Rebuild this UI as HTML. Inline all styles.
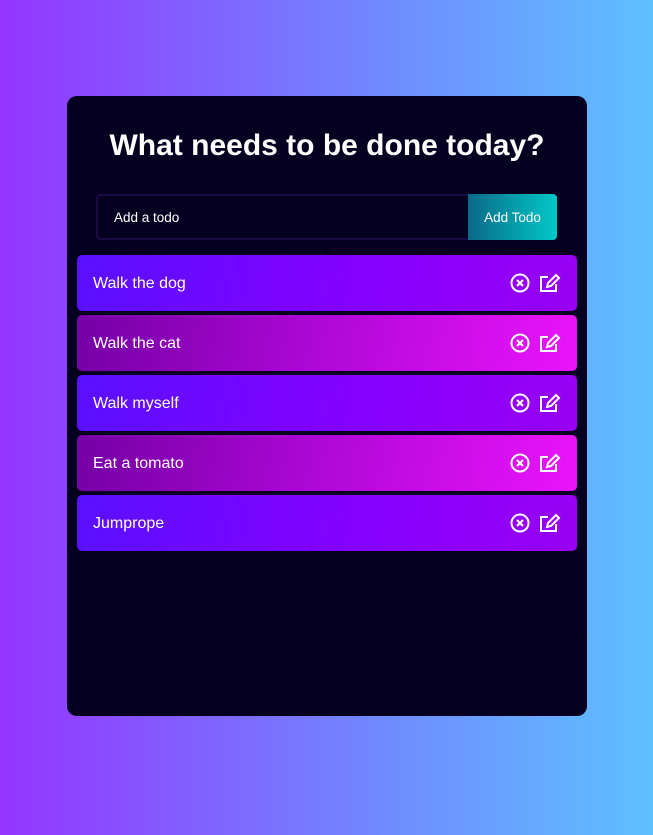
<!DOCTYPE html>
<html><head><style>
*{margin:0;padding:0;box-sizing:border-box}
body{width:653px;height:835px;background:linear-gradient(90deg,#9435ff 0%,#6f8cff 60%,#5ec0ff 100%);font-family:"Liberation Sans",sans-serif;position:relative;overflow:hidden}
.card{position:absolute;left:67px;top:96px;width:520px;height:620px;background:#050020;border-radius:10px}
h1{position:absolute;top:33px;left:0;width:100%;text-align:center;color:#fff;font-size:30px;font-weight:bold}
.inp{position:absolute;left:29px;top:98px;width:373px;height:46px;border:2px solid #1a0a45;border-right:none;border-radius:4px 0 0 4px;color:#fff;font-size:13.5px;padding:14px 0 0 16px}
.btn{position:absolute;left:401px;top:98px;width:89px;height:46px;background:linear-gradient(90deg,#0a6a88,#00c8c8);border-radius:0 4px 4px 0;color:#fff;font-size:13.5px;text-align:center;line-height:47px}
.row{position:absolute;left:10px;width:500px;height:56px;border-radius:5px;color:#fff;font-size:16px;line-height:58px;padding-left:16px}
.p{background:linear-gradient(100deg,#5a10ff 0%,#8400ff 55%,#9800f2 100%)}
.k{background:linear-gradient(100deg,#7400a4 0%,#b008d8 50%,#ea14fa 100%)}
.ic{position:absolute;left:432px;top:17px;width:54px;height:22px}
</style></head><body>
<div class="card">
<h1>What needs to be done today?</h1>
<div class="inp">Add a todo</div>
<div class="btn">Add Todo</div>
<div class="row p" style="top:159px">Walk the dog<svg class="ic" viewBox="0 0 54 22"><circle cx="11" cy="11" r="8.5" fill="none" stroke="#fff" stroke-width="2"/><path d="M8 8l6 6M14 8l-6 6" stroke="#fff" stroke-width="2.2"/><path d="M39 5H32v14h15v-7" fill="none" stroke="#fff" stroke-width="2"/><path d="M38 15l1-4 8-8 3 3-8 8z" fill="none" stroke="#fff" stroke-width="2"/></svg></div>
<div class="row k" style="top:219px">Walk the cat<svg class="ic" viewBox="0 0 54 22"><circle cx="11" cy="11" r="8.5" fill="none" stroke="#fff" stroke-width="2"/><path d="M8 8l6 6M14 8l-6 6" stroke="#fff" stroke-width="2.2"/><path d="M39 5H32v14h15v-7" fill="none" stroke="#fff" stroke-width="2"/><path d="M38 15l1-4 8-8 3 3-8 8z" fill="none" stroke="#fff" stroke-width="2"/></svg></div>
<div class="row p" style="top:279px">Walk myself<svg class="ic" viewBox="0 0 54 22"><circle cx="11" cy="11" r="8.5" fill="none" stroke="#fff" stroke-width="2"/><path d="M8 8l6 6M14 8l-6 6" stroke="#fff" stroke-width="2.2"/><path d="M39 5H32v14h15v-7" fill="none" stroke="#fff" stroke-width="2"/><path d="M38 15l1-4 8-8 3 3-8 8z" fill="none" stroke="#fff" stroke-width="2"/></svg></div>
<div class="row k" style="top:339px">Eat a tomato<svg class="ic" viewBox="0 0 54 22"><circle cx="11" cy="11" r="8.5" fill="none" stroke="#fff" stroke-width="2"/><path d="M8 8l6 6M14 8l-6 6" stroke="#fff" stroke-width="2.2"/><path d="M39 5H32v14h15v-7" fill="none" stroke="#fff" stroke-width="2"/><path d="M38 15l1-4 8-8 3 3-8 8z" fill="none" stroke="#fff" stroke-width="2"/></svg></div>
<div class="row p" style="top:399px">Jumprope<svg class="ic" viewBox="0 0 54 22"><circle cx="11" cy="11" r="8.5" fill="none" stroke="#fff" stroke-width="2"/><path d="M8 8l6 6M14 8l-6 6" stroke="#fff" stroke-width="2.2"/><path d="M39 5H32v14h15v-7" fill="none" stroke="#fff" stroke-width="2"/><path d="M38 15l1-4 8-8 3 3-8 8z" fill="none" stroke="#fff" stroke-width="2"/></svg></div>
</div>
</body></html>
